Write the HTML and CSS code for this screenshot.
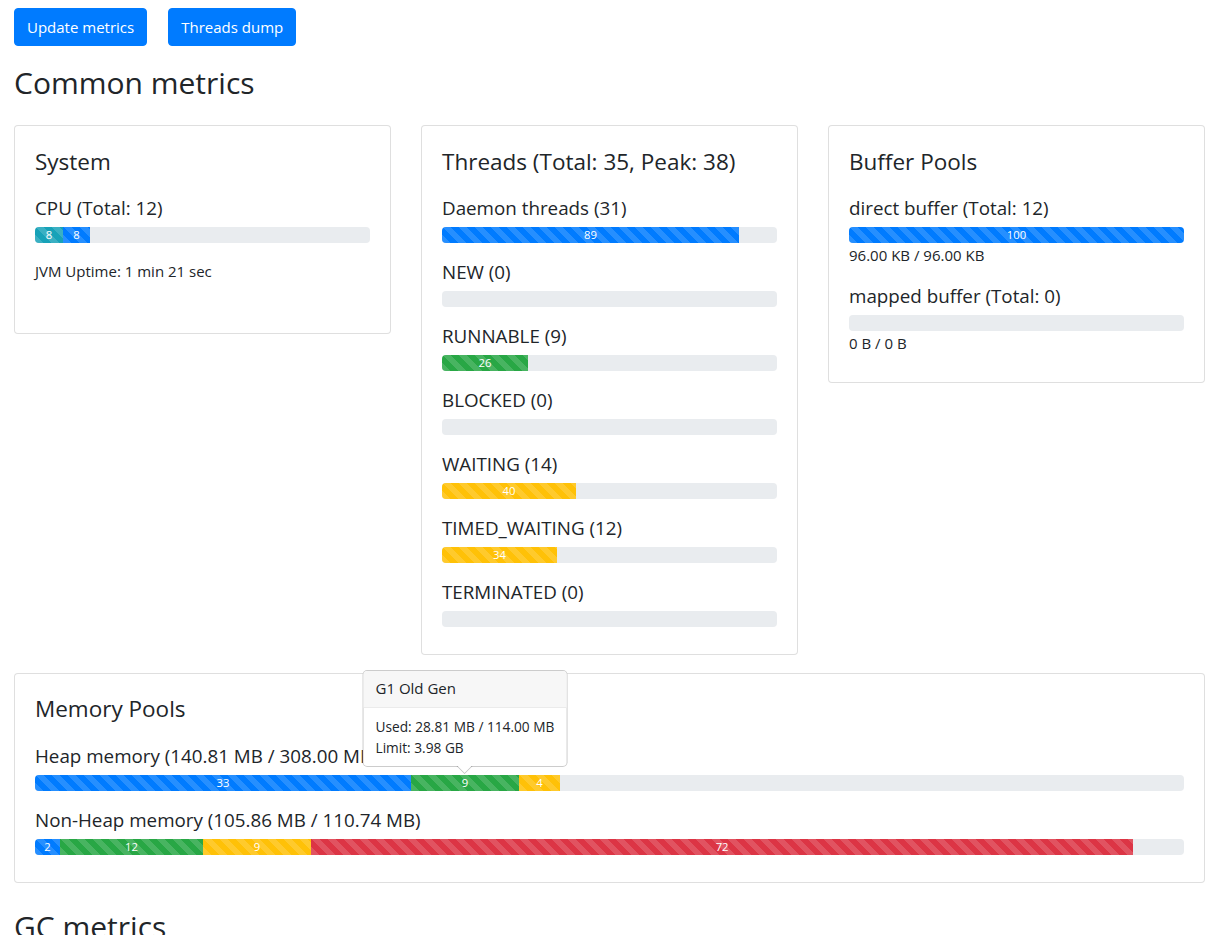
FILE: index.html
```html
<!DOCTYPE html>
<html lang="en">
<head>
<meta charset="utf-8">
<title>Metrics</title>
<link rel="stylesheet" href="styles.css">
</head>
<body>
<div class="page">
  <div class="toolbar">
    <button class="btn">Update metrics</button>
    <button class="btn">Threads dump</button>
  </div>

  <h2 class="section-title first">Common metrics</h2>

  <div class="card-deck">
    <div class="card">
      <h4 class="card-title">System</h4>
      <div class="metric">
        <h5 class="metric-label">CPU (Total: 12)</h5>
        <div class="progress">
          <div class="bar info" style="width:8.36%">8</div>
          <div class="bar primary" style="width:8.06%">8</div>
        </div>
      </div>
      <p class="uptime">JVM Uptime: 1 min 21 sec</p>
    </div>

    <div class="card">
      <h4 class="card-title">Threads (Total: 35, Peak: 38)</h4>
      <div class="metric">
        <h5 class="metric-label">Daemon threads (31)</h5>
        <div class="progress"><div class="bar primary" style="width:88.66%">89</div></div>
      </div>
      <div class="metric">
        <h5 class="metric-label">NEW (0)</h5>
        <div class="progress"></div>
      </div>
      <div class="metric">
        <h5 class="metric-label">RUNNABLE (9)</h5>
        <div class="progress"><div class="bar success" style="width:25.7%">26</div></div>
      </div>
      <div class="metric">
        <h5 class="metric-label">BLOCKED (0)</h5>
        <div class="progress"></div>
      </div>
      <div class="metric">
        <h5 class="metric-label">WAITING (14)</h5>
        <div class="progress"><div class="bar warning" style="width:40%">40</div></div>
      </div>
      <div class="metric">
        <h5 class="metric-label">TIMED_WAITING (12)</h5>
        <div class="progress"><div class="bar warning" style="width:34.3%">34</div></div>
      </div>
      <div class="metric">
        <h5 class="metric-label">TERMINATED (0)</h5>
        <div class="progress"></div>
      </div>
    </div>

    <div class="card">
      <h4 class="card-title">Buffer Pools</h4>
      <div class="metric">
        <h5 class="metric-label">direct buffer (Total: 12)</h5>
        <div class="progress"><div class="bar primary" style="width:100%">100</div></div>
        <div class="usage">96.00 KB / 96.00 KB</div>
      </div>
      <div class="metric">
        <h5 class="metric-label">mapped buffer (Total: 0)</h5>
        <div class="progress"></div>
        <div class="usage">0 B / 0 B</div>
      </div>
    </div>
  </div>

  <div class="card wide">
    <h4 class="card-title">Memory Pools</h4>
    <div class="metric">
      <h5 class="metric-label">Heap memory (140.81 MB / 308.00 MB)</h5>
      <div class="progress-wrap">
        <div class="progress">
          <div class="bar primary" style="width:32.72%">33</div>
          <div class="bar success" style="width:9.4%">9</div>
          <div class="bar warning" style="width:3.57%">4</div>
        </div>
        <div class="popover" style="left:37.42%">
          <div class="popover-header">G1 Old Gen</div>
          <div class="popover-body">
            <div>Used: 28.81 MB / 114.00 MB</div>
            <div>Limit: 3.98 GB</div>
          </div>
          <span class="popover-arrow"></span>
        </div>
      </div>
    </div>
    <div class="metric">
      <h5 class="metric-label">Non-Heap memory (105.86 MB / 110.74 MB)</h5>
      <div class="progress">
        <div class="bar primary" style="width:2.18%">2</div>
        <div class="bar success" style="width:12.45%">12</div>
        <div class="bar warning" style="width:9.4%">9</div>
        <div class="bar danger" style="width:71.54%">72</div>
      </div>
    </div>
  </div>

  <h2 class="section-title">GC metrics</h2>
</div>
</body>
</html>
```

FILE: styles.css
```css
* {
  box-sizing: border-box;
}

html,
body {
  margin: 0;
  padding: 0;
  background: #fff;
}

body {
  font-family: "Open Sans", "Noto Sans", "DejaVu Sans", sans-serif;
  font-size: 15px;
  line-height: 24px;
  color: #212529;
}

.page {
  padding: 8px 15px 0 14px;
}

.toolbar {
  display: flex;
  gap: 21px;
}

.btn {
  font: inherit;
  line-height: 24px;
  height: 38px;
  color: #fff;
  background: #007bff;
  border: 1px solid #007bff;
  border-radius: 4px;
  padding: 6px 12px;
  cursor: pointer;
}

.section-title {
  font-size: 30px;
  line-height: 38.4px;
  font-weight: 400;
  margin: 25px 0 0;
}

.section-title.first {
  margin: 18px 0 22.6px;
}

.card-deck {
  display: flex;
  align-items: flex-start;
  gap: 30px;
}

.card {
  flex: 1 1 0;
  min-width: 0;
  background: #fff;
  border: 1px solid rgba(0, 0, 0, 0.125);
  border-radius: 4px;
  padding: 20px 20px 27.5px;
}

.card.wide {
  margin-top: 17.5px;
}

.card-title {
  font-size: 22.5px;
  line-height: 28.8px;
  font-weight: 400;
  margin: 0 0 20px;
  position: relative;
  top: 1.5px;
}

.metric-label {
  font-size: 18.8px;
  line-height: 24px;
  font-weight: 400;
  margin: 0 0 8px;
  position: relative;
  top: 1px;
}

.metric + .metric {
  margin-top: 16px;
}

.uptime {
  margin: 16px 0 23px;
}

.progress-wrap {
  position: relative;
}

.progress {
  display: flex;
  height: 16px;
  overflow: hidden;
  background: #e9ecef;
  border-radius: 4px;
  font-size: 11.3px;
  line-height: 16px;
}

.bar {
  height: 16px;
  color: #fff;
  text-align: center;
  white-space: nowrap;
  overflow: hidden;
  background-image: linear-gradient(45deg,
      rgba(255, 255, 255, 0.15) 25%, transparent 25%,
      transparent 50%, rgba(255, 255, 255, 0.15) 50%,
      rgba(255, 255, 255, 0.15) 75%, transparent 75%, transparent);
  background-size: 16px 16px;
}

.bar.primary { background-color: #007bff; }
.bar.info { background-color: #17a2b8; }
.bar.success { background-color: #28a745; }
.bar.warning { background-color: #ffc107; }
.bar.danger { background-color: #dc3545; }

.usage {
  line-height: 24px;
}

.popover {
  position: absolute;
  bottom: 24px;
  transform: translateX(-50%);
  background: #fff;
  border: 1px solid rgba(0, 0, 0, 0.2);
  border-radius: 4.8px;
  white-space: nowrap;
  z-index: 10;
}

.popover-header {
  font-size: 15px;
  line-height: 19.2px;
  padding: 8px 12px;
  background: #f7f7f7;
  border-bottom: 1px solid #ebebeb;
  border-radius: 3.8px 3.8px 0 0;
}

.popover-body {
  font-size: 13.7px;
  line-height: 21px;
  padding: 8px 12px;
}

.popover-arrow {
  position: absolute;
  left: 50%;
  bottom: -8px;
  margin-left: -8px;
  width: 0;
  height: 0;
  border-left: 8px solid transparent;
  border-right: 8px solid transparent;
  border-top: 8px solid rgba(0, 0, 0, 0.25);
}

.popover-arrow::after {
  content: "";
  position: absolute;
  left: -8px;
  top: -9px;
  border-left: 8px solid transparent;
  border-right: 8px solid transparent;
  border-top: 8px solid #fff;
}
```
